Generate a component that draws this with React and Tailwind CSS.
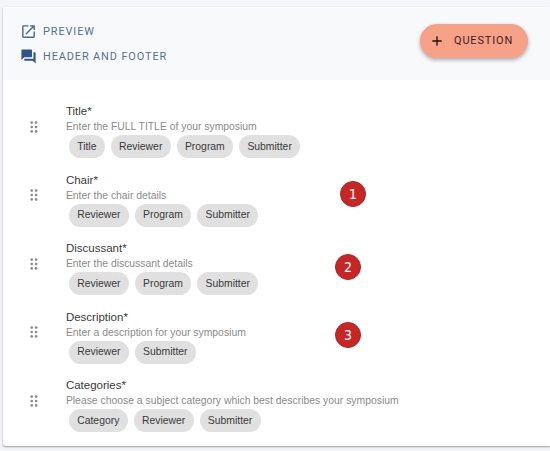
import React from "react";
import { MdOpenInNew, MdQuestionAnswer, MdAdd } from "react-icons/md";

const questions = [
  {
    id: 1,
    title: "Title",
    hint: "Enter the FULL TITLE of your symposium",
    tags: ["Title", "Reviewer", "Program", "Submitter"],
  },
  {
    id: 2,
    title: "Chair",
    hint: "Enter the chair details",
    tags: ["Reviewer", "Program", "Submitter"],
  },
  {
    id: 3,
    title: "Discussant",
    hint: "Enter the discussant details",
    tags: ["Reviewer", "Program", "Submitter"],
  },
  {
    id: 4,
    title: "Description",
    hint: "Enter a description for your symposium",
    tags: ["Reviewer", "Submitter"],
  },
  {
    id: 5,
    title: "Categories",
    hint: "Please choose a subject category which best describes your symposium",
    tags: ["Category", "Reviewer", "Submitter"],
  },
];

// Callouts that float over the list
const callouts = [
  { label: "1", position: "left-[340px] top-[181px]" },
  { label: "2", position: "left-[335px] top-[254px]" },
  { label: "3", position: "left-[335px] top-[322px]" },
];

function DragHandle() {
  return (
    <svg width="8" height="12" viewBox="0 0 8 12" className="shrink-0 fill-[#8c8c8c]">
      {[1.6, 6, 10.4].map((y) => (
        <g key={y}>
          <circle cx="1.7" cy={y} r="1.35" />
          <circle cx="6.1" cy={y} r="1.35" />
        </g>
      ))}
    </svg>
  );
}

function QuestionRow({ question }) {
  return (
    <div className="flex h-[68.5px] items-start">
      <div className="flex h-[54px] w-[62.9px] shrink-0 items-start pt-[17.5px] pl-[27px]">
        <DragHandle />
      </div>
      <div>
        <h3 className="text-[11.5px] leading-[16px] text-[#3a3a3a]">{question.title}*</h3>
        <p className="text-[10.38px] leading-[15px] text-[#8b8b8b]">{question.hint}</p>
        <div className="mt-px ml-[3px] flex gap-[6px]">
          {question.tags.map((tag) => (
            <span
              key={tag}
              className="flex h-[23px] items-center rounded-full bg-[#e0e0e0] px-[8.3px] text-[10.4px] text-[#3a3a3a]"
            >
              {tag}
            </span>
          ))}
        </div>
      </div>
    </div>
  );
}

export default function App() {
  return (
    <div className="relative h-[451px] w-[550px] overflow-hidden bg-[#f4f5f9] pt-[7px] pl-[3px] font-['Liberation_Sans',Arial,sans-serif]">
      <div className="h-[439px] rounded-bl-[3px] bg-white shadow-[0_1px_2px_rgba(0,0,0,0.38)]">
        {/* Header */}
        <div className="flex h-[73px] items-start justify-between bg-[#f7f9fb] pr-[22px] pl-[17px] font-['Roboto',sans-serif]">
          <div className="flex flex-col gap-[9px] pt-4 text-[10.9px] tracking-[0.9px] text-[#56718f]">
            <button className="flex h-4 items-center gap-[6px]">
              <MdOpenInNew size={17} className="text-[#4c6a8c]" />
              <span className="pt-[3px]">PREVIEW</span>
            </button>
            <button className="flex h-4 items-center gap-[6px]">
              <MdQuestionAnswer size={17} className="text-[#315685]" />
              <span className="pt-[3px]">HEADER AND FOOTER</span>
            </button>
          </div>
          <button className="mt-[17px] flex h-[34px] w-[108px] items-center rounded-full bg-[#f7a189] pl-[9px] text-[10.9px] tracking-[0.9px] text-[#3b1e1b] shadow-[0_2px_4px_rgba(0,0,0,0.32)]">
            <MdAdd size={16} className="mr-[9px] text-[#1f1010]" />
            QUESTION
          </button>
        </div>

        {/* Question list */}
        <div className="pt-[23px]">
          {questions.map((question) => (
            <QuestionRow key={question.id} question={question} />
          ))}
        </div>
      </div>

      {callouts.map((callout) => (
        <span
          key={callout.label}
          className={`absolute flex size-[26px] items-center justify-center rounded-full border border-[#b3201f] bg-[#c62626] font-['DejaVu_Sans_Condensed','DejaVu_Sans',sans-serif] text-[14px] leading-none text-white ${callout.position}`}
        >
          {callout.label}
        </span>
      ))}
    </div>
  );
}
